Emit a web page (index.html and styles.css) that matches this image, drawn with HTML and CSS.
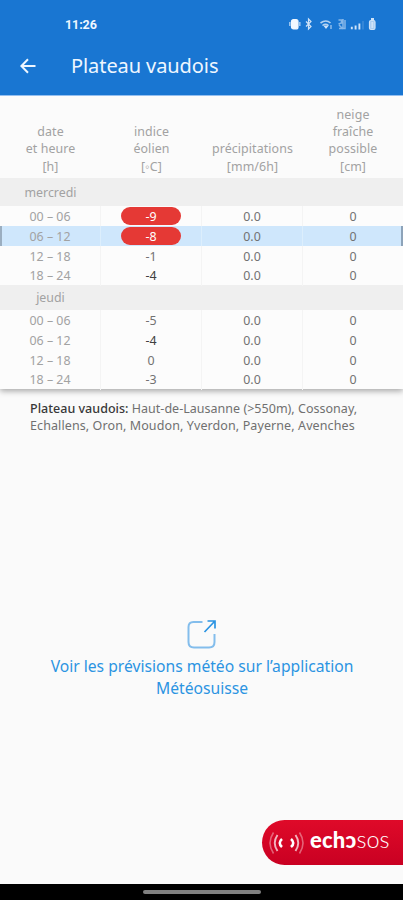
FILE: index.html
```
<!DOCTYPE html>
<html lang="fr">
<head>
<meta charset="utf-8">
<title>Plateau vaudois</title>
<link rel="stylesheet" href="styles.css">
</head>
<body>
<div class="screen">
  <header class="appbar">
    <div class="status">
      <span class="clock">11:26</span>
      <svg class="status-icons" width="90" height="16" viewBox="0 0 90 16" fill="none" stroke="#cfe3f8" stroke-width="1.2">
        <rect x="2.500" y="3.500" width="6.500" height="9.500" rx="2" fill="#f2f8ff" stroke="#f2f8ff"/>
        <path d="M.8 6v4M10.800 6v4" stroke-width="1.600" opacity=".7"/>
        <path d="M17 5.500l5 5L19.500 13V3L22 5.500 17 10.500"/>
        <path d="M31.500 7q5.500-4 10 0M33.500 9.500q3-2.500 6 0" stroke-width="1.600" opacity=".85"/>
        <path d="M35.500 10h3l-1.500 2z" fill="#cfe3f8"/>
        <path d="M42 9v4" opacity=".8"/>
        <path d="M49.500 4h3v3l-3 1M54 3v10M50 9l4 4M56 4v8.500H50" opacity=".6" stroke-width="1.500"/>
        <path d="M62.800 10.800v2.500M66.600 9.500v4M70.400 7.500v6" stroke-width="1.900"/>
        <path d="M74 5v8.500" opacity=".15" stroke-width="2"/>
        <rect x="80.500" y="4.500" width="5.500" height="9" rx="1.500" fill="#a9cdf1"/>
        <path d="M82 3h3M83.300 6v6" stroke-width="1.800"/>
      </svg>
    </div>
    <div class="titlebar">
      <svg class="back" width="16" height="16" viewBox="0 0 16 16" fill="none" stroke="#eef6ff" stroke-width="2"><path d="M15.500 8H2M8 1.200L1.400 8 8 14.800"/></svg>
      <h1>Plateau vaudois</h1>
    </div>
  </header>

  <section class="forecast">
    <div class="row head">
      <div>date<br>et heure<br>[h]</div><div>indice<br>éolien<br>[◦C]</div><div>précipitations<br>[mm/6h]</div><div>neige<br>fraîche<br>possible<br>[cm]</div>
    </div>
    <div class="row day first"><div>mercredi</div></div>
    <div class="row"><div>00 – 06</div><div><span class="alert">-9</span></div><div>0.0</div><div>0</div></div>
    <div class="row current"><div>06 – 12</div><div><span class="alert">-8</span></div><div>0.0</div><div>0</div></div>
    <div class="row"><div>12 – 18</div><div>-1</div><div>0.0</div><div>0</div></div>
    <div class="row"><div>18 – 24</div><div class="dark">-4</div><div>0.0</div><div>0</div></div>
    <div class="row day"><div>jeudi</div></div>
    <div class="row"><div>00 – 06</div><div>-5</div><div>0.0</div><div>0</div></div>
    <div class="row"><div>06 – 12</div><div class="dark">-4</div><div>0.0</div><div>0</div></div>
    <div class="row"><div>12 – 18</div><div>0</div><div>0.0</div><div>0</div></div>
    <div class="row"><div>18 – 24</div><div>-3</div><div>0.0</div><div>0</div></div>
  </section>

  <main>
    <p class="places"><span class="line"><b>Plateau vaudois:</b> Haut-de-Lausanne (&gt;550m), Cossonay,</span><br><span class="line wide">Echallens, Oron, Moudon, Yverdon, Payerne, Avenches</span></p>
    <a class="external">
      <svg width="30" height="31" viewBox="0 0 30 31" fill="none">
        <path d="M15.500 3H6.500Q1.500 3 1.500 8V23Q1.500 28.500 7 28.500H22Q27.500 28.500 27.500 23V15" stroke="#83bdec" stroke-width="2"/>
        <path d="M17.500 13L27.500 2.500M20.500 2H28V9.500" stroke="#2b94e2" stroke-width="1.700"/>
      </svg>
      <span>Voir les prévisions météo sur l’application<br>Météosuisse</span>
    </a>
    <div class="sos">
      <svg width="38" height="26" viewBox="0 0 38 26" fill="none" stroke="#fff">
        <path d="M14 9q-4.500 4 0 8M23 9q4.500 4 0 8" stroke-width="2.600"/>
        <path d="M9.500 5q-5.500 8 0 16M27.500 5q5.500 8 0 16" stroke-width="1.900" opacity=".7"/>
        <path d="M5.500 2.500q-7 10.500 0 21M31.500 2.500q7 10.500 0 21" stroke-width="1.600" opacity=".38"/>
      </svg>
      <span class="brand"><b>echɔ</b><span>sos</span></span>
    </div>
  </main>
  <footer><span></span></footer>
</div>
</body>
</html>
```
FILE: styles.css
```
* { box-sizing: border-box; }
body { margin: 0; font-family: "Noto Sans", sans-serif; }
.screen { width: 403px; height: 900px; background: #fafafa; display: flex; flex-direction: column; overflow: hidden; }
.appbar { height: 96px; background: #1976d2; border-bottom: 1px solid #94bff0; flex: none; color: #eef6ff; position: relative; z-index: 1; }
.status { height: 46px; padding: 16px 24px 0 65px; display: flex; justify-content: space-between; }
.clock { font: 700 12.500px/17px Roboto, sans-serif; letter-spacing: -.1px; }
.titlebar { height: 40px; padding-left: 20px; display: flex; align-items: center; gap: 35px; }
h1 { margin: 0; font-size: 20px; font-weight: 400; line-height: 26px; letter-spacing: -.08px; }
.forecast { flex: none; height: 293px; box-shadow: 0 2px 6px rgba(0,0,0,.35); font-size: 12.400px; color: #727272; }
.row { display: grid; grid-template-columns: 101px 101px 101px 100px; height: 19.75px; line-height: 21.200px; text-align: center; background: #fcfcfc; }
.row > div { border-right: 1px solid #f4f4f4; }
.row > div:first-child { color: #a2a2a2; }
.row > div:last-child { border-right: 0; }
.row > .dark { color: #404040; }
.row.head { height: 82px; align-items: end; padding-bottom: 3px; line-height: 17.3px; color: #a2a2a2; background: #fbfbfb; letter-spacing: .1px; }
.row.head > div { border: 0; }
.row.day { height: 25px; line-height: 25.500px; background: #efefef; }
.row.day.first { height: 28px; line-height: 29px; }
.row.day > div { border: 0; }
.row.current { background: #cfe7fc; box-shadow: inset 2px 0 #9baec0, inset -2px 0 #8da3b9; }
.row.current > div { border-color: #dceefc; }
.row .alert { display: block; width: 60px; height: 18px; line-height: 19px; margin: 1px auto 0; border-radius: 9px; background: #e53935; color: #fff; }
main { flex: 1; display: flex; flex-direction: column; }
.places { margin: 11px 0 0 30px; font-size: 12.500px; line-height: 17.3px; color: #707070; white-space: nowrap; }
.line { letter-spacing: .02px; }
.line.wide { letter-spacing: .1px; }
.places b { font-weight: 500; color: #383838; }
.external { margin-top: 184px; display: flex; flex-direction: column; align-items: center; color: #2b94e2; font-size: 15.660px; line-height: 22px; text-align: center; white-space: nowrap; }
.external span { margin-top: 5px; padding-left: 1px; }
.sos { margin-top: auto; margin-bottom: 19px; align-self: flex-end; width: 141px; height: 45px; border-radius: 23px 0 0 23px; background: linear-gradient(#df0a29, #c90022); display: flex; align-items: center; padding-left: 6px; gap: 4px; color: #fff; }
.brand { font: 300 21px/24px Lato, sans-serif; white-space: nowrap; margin-top: -6px; }
.brand b { font-weight: 900; font-size: 22px; letter-spacing: .2px; }
.brand span { font-size: 23.500px; letter-spacing: 0; }
footer { flex: none; height: 16px; background: #000; display: flex; justify-content: center; padding-top: 6px; }
footer span { width: 118px; height: 4px; border-radius: 2px; background: #808080; }
```
